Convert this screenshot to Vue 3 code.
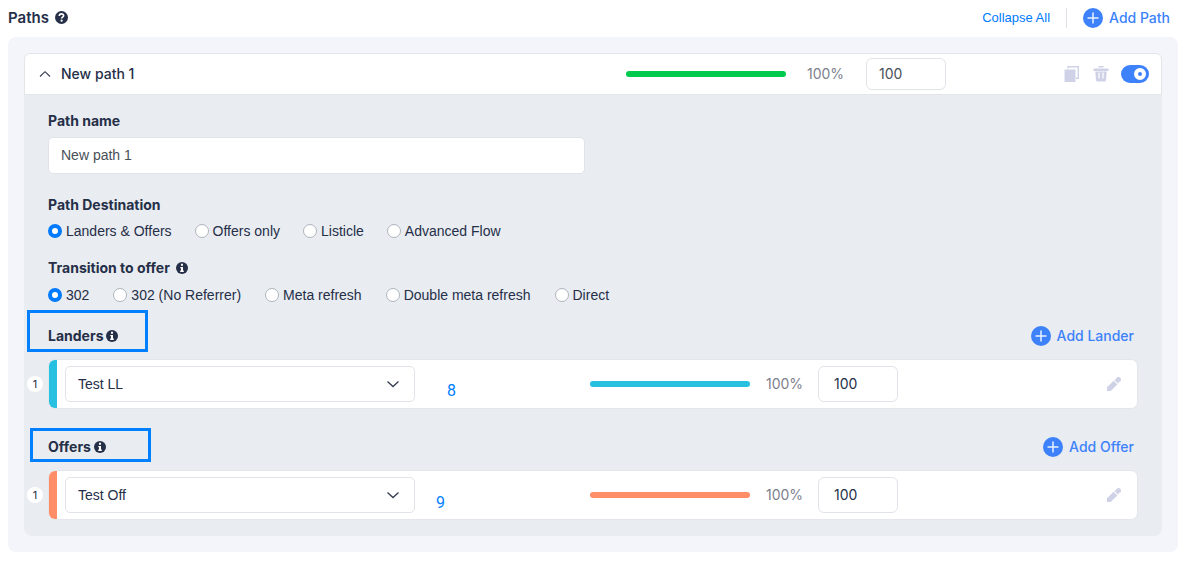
<script setup>
import { ref } from 'vue'

const pathName = ref('New path 1')
const weight = ref(100)
const enabled = ref(true)
const destination = ref('Landers & Offers')
const transition = ref('302')
const destinations = ['Landers & Offers', 'Offers only', 'Listicle', 'Advanced Flow']
const transitions = ['302', '302 (No Referrer)', 'Meta refresh', 'Double meta refresh', 'Direct']
const sections = ref([
  { key: 'lander', title: 'Landers', add: 'Add Lander', item: 'Test LL', weight: 100, mark: '8' },
  { key: 'offer', title: 'Offers', add: 'Add Offer', item: 'Test Off', weight: 100, mark: '9' }
])
</script>

<template>
  <main class="page">
    <header class="topbar">
      <h1 class="heading title">Paths</h1>
      <svg class="help" viewBox="0 0 13 13" aria-hidden="true">
        <circle cx="6.5" cy="6.5" r="6.5" fill="#252f48" />
        <path d="M4.3 5C4.3 2.1 8.8 2.2 8.6 4.8C8.5 6.1 6.6 6.1 6.6 7.5" fill="none" stroke="#fff" stroke-width="1.7" />
        <circle cx="6.6" cy="9.7" r="1.1" fill="#fff" />
      </svg>
      <div class="top-actions">
        <button type="button" class="collapse">Collapse All</button>
        <span class="divider"></span>
        <button type="button" class="add">
          <svg class="plus" viewBox="0 0 20 20" aria-hidden="true">
            <circle cx="10" cy="10" r="10" fill="#3d82fb" />
            <path d="M10 4.5v11M4.5 10h11" stroke="#e9f1ff" stroke-width="1.5" />
          </svg>
          Add Path
        </button>
      </div>
    </header>

    <section class="panel">
      <article class="path">
        <header class="path-head">
          <button type="button" class="toggle-path" aria-label="Collapse path">
            <svg class="chevron" viewBox="0 0 12 8" aria-hidden="true"><path d="M1 6.5L6 1.7L11 6.5" fill="none" stroke="#353c50" stroke-width="1.1" /></svg>
          </button>
          <h2 class="path-title">New path 1</h2>
          <span class="bar green"></span>
          <span class="pct">100%</span>
          <input v-model="weight" class="weight small" aria-label="Path weight" />
          <div class="path-tools">
            <button type="button" class="icon-btn" aria-label="Duplicate path">
              <svg class="icon" viewBox="0 0 16 16" aria-hidden="true">
                <path d="M.5 3.500H11.500V16H.5z" fill="#cfd2e6" />
                <path d="M4 2.500V.8h10.300v11.500h-2.300" fill="none" stroke="#cfd2e6" stroke-width="1.400" />
              </svg>
            </button>
            <button type="button" class="icon-btn" aria-label="Delete path">
              <svg class="icon" viewBox="0 0 16 16" aria-hidden="true">
                <path d="M.5 2.500h15V5H.5zM5.500 1.500V0h5v1.500zM2.300 5.500h11.400l-.7 8.500q-.1 1.500-1.500 1.500h-7Q3.100 15.500 3 14z" fill="#cfd2e6" />
                <path d="M6 6.500v6M10 6.500v6" stroke="#fff" stroke-width="1.200" />
              </svg>
            </button>
            <input v-model="enabled" type="checkbox" class="switch" aria-label="Path enabled" />
          </div>
        </header>

        <div class="path-body">
          <label class="heading" for="path-name">Path name</label>
          <input id="path-name" v-model="pathName" class="name-input" />

          <h3 id="destination" class="heading">Path Destination</h3>
          <div class="radios" role="radiogroup" aria-labelledby="destination">
            <label v-for="d in destinations" :key="d" class="radio">
              <input v-model="destination" type="radio" name="destination" :value="d" />{{ d }}
            </label>
          </div>

          <h3 id="transition" class="heading with-info">
            Transition to offer
            <svg class="info" viewBox="0 0 12 12" aria-hidden="true">
              <circle cx="6" cy="6" r="6" fill="#252f48" />
              <path d="M5 1.700h2v2H5zM4.300 4.900H7v3.700h.8V10H4.200V8.600H5V6.200h-.7z" fill="#fff" />
            </svg>
          </h3>
          <div class="radios last" role="radiogroup" aria-labelledby="transition">
            <label v-for="t in transitions" :key="t" class="radio">
              <input v-model="transition" type="radio" name="transition" :value="t" />{{ t }}
            </label>
          </div>

          <section v-for="s in sections" :key="s.key" class="group" :class="s.key">
            <div class="group-head">
              <span class="highlight"></span>
              <h3 class="heading with-info tight">
                {{ s.title }}
                <svg class="info" viewBox="0 0 12 12" aria-hidden="true">
                  <circle cx="6" cy="6" r="6" fill="#252f48" />
                  <path d="M5 1.700h2v2H5zM4.300 4.900H7v3.700h.8V10H4.200V8.600H5V6.200h-.7z" fill="#fff" />
                </svg>
              </h3>
              <button type="button" class="add">
                <svg class="plus" viewBox="0 0 20 20" aria-hidden="true">
                  <circle cx="10" cy="10" r="10" fill="#3d82fb" />
                  <path d="M10 4.500v11M4.500 10h11" stroke="#e9f1ff" stroke-width="1.500" />
                </svg>
                {{ s.add }}
              </button>
            </div>
            <div class="row">
              <span class="index">1</span>
              <span class="stripe"></span>
              <div class="select-wrap">
                <select class="select" :aria-label="s.title">
                  <option>{{ s.item }}</option>
                </select>
                <svg class="chevron caret" viewBox="0 0 12 8" aria-hidden="true"><path d="M.5 1.500L6 6.500L11.500 1.500" fill="none" stroke="#353c50" stroke-width="1.300" /></svg>
              </div>
              <span class="mark">{{ s.mark }}</span>
              <span class="bar"></span>
              <span class="pct">100%</span>
              <input v-model="s.weight" class="weight" :aria-label="s.title + ' weight'" />
              <button type="button" class="icon-btn edit" aria-label="Edit">
                <svg class="pencil" viewBox="0 0 14 14" aria-hidden="true">
                  <path d="M0 14V10.300L6.600 3.700L10.300 7.400L3.700 14zM7.300 3L8.200 2.100L11.900 5.800L11 6.700z" fill="#cfd2e6" />
                  <circle cx="11.500" cy="2.500" r="2.500" fill="#cfd2e6" />
                </svg>
              </button>
            </div>
          </section>
        </div>
      </article>
    </section>
  </main>
</template>

<style>
body {
  background: #fff;
}
</style>

<style scoped>
.page,
.page *,
.page *::before {
  box-sizing: border-box;
}
.page {
  padding-left: 8px;
  font-family: Inter, "Liberation Sans", sans-serif;
  font-size: 14px;
  line-height: 20px;
  color: #252f48;
}
button,
input,
select {
  font: inherit;
  color: inherit;
}
button {
  padding: 0;
  border: 0;
  background: none;
  cursor: pointer;
}
svg {
  display: block;
  flex: none;
}
.heading {
  display: block;
  margin: 0;
  font-size: 14px;
  line-height: 20px;
  font-weight: 700;
}
.title {
  font-size: 15px;
  font-weight: 600;
}
.topbar {
  display: flex;
  align-items: center;
  gap: 6px;
  height: 37px;
  padding: 0 8px 2px 0;
}
.help {
  width: 13px;
  height: 13px;
}
.top-actions {
  display: flex;
  align-items: center;
  gap: 16px;
  margin-left: auto;
}
.collapse,
.name-input,
.radio,
.select {
  font-family: "Liberation Sans", Arial, sans-serif;
}
.collapse {
  font-size: 13px;
  color: #007bff;
}
.divider {
  width: 1px;
  height: 20px;
  background: #dfe1e8;
}
.add {
  display: flex;
  align-items: center;
  gap: 6px;
  font-weight: 500;
  color: #3d82fb;
}
.plus {
  width: 20px;
  height: 20px;
}
.panel {
  padding: 16px;
  border-radius: 8px;
  background: #f3f5fa;
}
.path {
  border-radius: 8px;
  background: #e9ecf1;
}
.path-head {
  display: flex;
  align-items: center;
  height: 42px;
  padding: 0 12px 0 14px;
  border: 1px solid #e3e5e9;
  border-radius: 6px 6px 0 0;
  background: #fff;
}
.chevron {
  width: 12px;
  height: 8px;
}
.path-title {
  flex: 1;
  margin: 0 0 0 10px;
  font-size: 14px;
  font-weight: 500;
}
.bar {
  width: 160px;
  height: 6px;
  border-radius: 3px;
}
.green {
  background: #00ca4e;
}
.pct {
  width: 80px;
  padding-left: 21px;
  color: #7d818d;
}
.weight {
  width: 80px;
  height: 36px;
  padding: 0 15px 2px;
  border: 1px solid #e1e3e8;
  border-radius: 6px;
  background: #fff;
}
.weight.small {
  height: 32px;
  padding: 0 12px 2px;
  color: #495057;
}
.path-tools {
  display: flex;
  align-items: center;
  gap: 12px;
  margin-left: 118px;
}
.icon {
  width: 16px;
  height: 16px;
}
.icon-btn + .icon-btn {
  margin-left: 1px;
}
.switch {
  appearance: none;
  display: flex;
  align-items: center;
  justify-content: flex-end;
  width: 28px;
  height: 18px;
  margin: 0;
  padding: 0 3px;
  border-radius: 9px;
  background: #3d82fb;
}
.switch::before {
  content: "";
  width: 12px;
  height: 12px;
  border: 4px solid #fff;
  border-radius: 50%;
}
.switch:not(:checked) {
  justify-content: flex-start;
  background: #cfd2e6;
}
.path-body {
  padding: 16px 24px;
}
.name-input {
  display: block;
  width: 537px;
  max-width: 100%;
  height: 37px;
  margin: 6px 0 21px;
  padding: 0 12px 2px;
  border: 1px solid #e1e3e8;
  border-radius: 5px;
  background: #fff;
  color: #495057;
}
.radios {
  display: flex;
  flex-wrap: wrap;
  gap: 23px;
  margin: 6px 0 17px;
}
.radios.last {
  gap: 24px;
  margin: 7px 0 21px;
}
.radio {
  display: flex;
  align-items: center;
  gap: 4px;
}
.radio input {
  appearance: none;
  width: 14px;
  height: 14px;
  margin: 0;
  border: 1px solid #adb5bd;
  border-radius: 50%;
  background: #fff;
}
.radio input:checked {
  border: 4px solid #007bff;
}
.with-info {
  display: flex;
  align-items: center;
  gap: 6px;
}
.with-info.tight {
  gap: 3px;
}
.info {
  width: 12px;
  height: 12px;
}
.group + .group {
  margin-top: 28px;
}
.group-head {
  position: relative;
  display: flex;
  align-items: center;
  justify-content: space-between;
  margin-bottom: 13px;
  padding-right: 4px;
}
.highlight {
  position: absolute;
  border: 3px solid #0080ff;
}
.lander .highlight {
  left: -21px;
  top: -16px;
  width: 121px;
  height: 42px;
}
.offer .highlight {
  left: -18px;
  top: -9px;
  width: 121px;
  height: 34px;
}
.row {
  position: relative;
  display: flex;
  align-items: center;
  height: 50px;
  border: 1px solid #e3e6ea;
  border-radius: 7px;
  background: #fff;
}
.index {
  position: absolute;
  left: -22px;
  width: 16px;
  height: 16px;
  border-radius: 50%;
  background: #fff;
  font-size: 11px;
  line-height: 16px;
  text-align: center;
}
.stripe {
  align-self: stretch;
  width: 8px;
  margin-right: 8px;
  border-radius: 6px 0 0 6px;
}
.lander .bar,
.lander .stripe {
  background: #27c0e0;
}
.offer .bar,
.offer .stripe {
  background: #ff8e68;
}
.select-wrap {
  position: relative;
  width: 350px;
  margin-right: auto;
}
.select {
  appearance: none;
  display: block;
  width: 100%;
  height: 36px;
  padding: 0 12px;
  border: 1px solid #e1e3e8;
  border-radius: 5px;
  background: #fff;
}
.caret {
  position: absolute;
  right: 16px;
  top: 14px;
  pointer-events: none;
}
.mark {
  position: absolute;
  top: 21px;
  left: 398px;
  font-family: Roboto, "Liberation Sans", sans-serif;
  font-size: 16px;
  color: #0080ff;
}
.offer .mark {
  top: 22px;
  left: 387px;
}
.row .pct {
  width: 68px;
  padding-left: 16px;
}
.edit {
  margin: 0 16px 0 209px;
}
.pencil {
  width: 14px;
  height: 14px;
}
</style>
